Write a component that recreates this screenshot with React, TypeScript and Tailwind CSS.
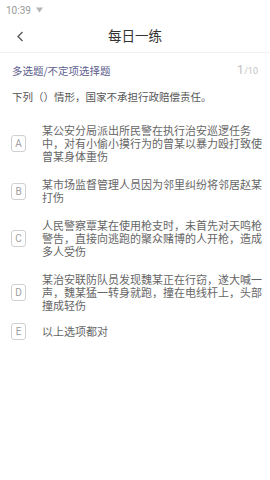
import React from "react";

const options = [
  { k: "A", t: "某公安分局派出所民警在执行治安巡逻任务中，对有小偷小摸行为的曾某以暴力殴打致使曾某身体重伤" },
  { k: "B", t: "某市场监督管理人员因为邻里纠纷将邻居赵某打伤" },
  { k: "C", t: "人民警察覃某在使用枪支时，未首先对天鸣枪警告，直接向逃跑的聚众赌博的人开枪，造成多人受伤" },
  { k: "D", t: "某治安联防队员发现魏某正在行窃，遂大喊一声，魏某猛一转身就跑，撞在电线杆上，头部撞成轻伤" },
  { k: "E", t: "以上选项都对" },
];

export default function App() {
  return (
    <div
      className="w-[270px] h-[480px] bg-white overflow-hidden"
      style={{ fontFamily: '"Noto Sans CJK SC", "Noto Sans", Roboto, sans-serif' }}
    >
      <div className="h-[20px] flex items-center pl-[6px] gap-[5px] text-[10px] text-[#9a9a9a]" style={{ fontFamily: 'Roboto, sans-serif' }}>
        <span>10:39</span>
        <svg width="7" height="6" viewBox="0 0 7 6"><path d="M0 0.5 L7 0.5 L3.5 5.5 Z" fill="#b5b5b5" /></svg>
      </div>
      <div className="h-[33px] relative flex items-center justify-center border-b border-[#f1f1f1]">
        <svg className="absolute left-[16px] top-[11px]" width="8" height="11" viewBox="0 0 8 11">
          <path d="M6.5 1 L2 5.5 L6.5 10" stroke="#555" strokeWidth="1.3" fill="none" />
        </svg>
        <span className="text-[13.5px] text-[#333] mt-[-1px]">每日一练</span>
      </div>
      <div className="flex items-end justify-between pl-[12px] pr-[12px] pt-[9px]">
        <span className="text-[10.5px] text-[#5c5c8c] leading-[14px]">多选题/不定项选择题</span>
        <span className="text-[#c4c4c4] leading-[14px]" style={{ fontFamily: 'Roboto, sans-serif' }}>
          <span className="text-[13px]">1</span>
          <span className="text-[9px]">/10</span>
        </span>
      </div>
      <div className="px-[12px] pt-[12px] text-[10.5px] text-[#555] leading-[14px]">
        下列（）情形，国家不承担行政赔偿责任。
      </div>
      <div className="flex flex-col gap-[15px] pt-[20px] pl-[11px] pr-[6px]">
        {options.map((o) => (
          <div key={o.k} className={`flex items-center gap-[16px] ${o.k === "E" ? "mt-[-4px]" : ""}`}>
            <div
              className="w-[15px] h-[17px] shrink-0 border border-[#d0d0d0] rounded-[3px] flex items-center justify-center text-[10px] text-[#a0a0a0]"
              style={{ fontFamily: 'Roboto, sans-serif' }}
            >
              {o.k}
            </div>
            <div className="text-[11px] leading-[13px] text-[#666]">{o.t}</div>
          </div>
        ))}
      </div>
    </div>
  );
}
